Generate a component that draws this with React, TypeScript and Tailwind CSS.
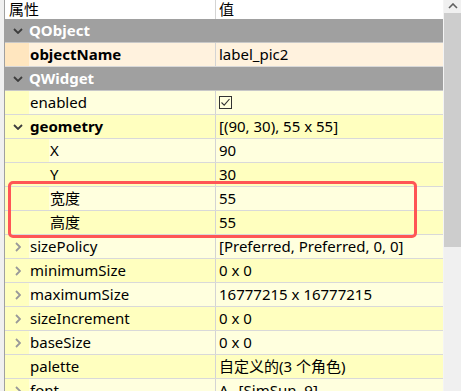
import React from 'react';

type Row = {
  name: string;
  kind: 'group' | 'prop';
  level?: number;
  expand?: 'open' | 'closed';
  bold?: boolean;
  tone?: 'dark' | 'light';
  band?: 'obj' | 'widget';
  value?: React.ReactNode;
};

const colors = {
  obj: { dark: 'bg-[#ffe6bf]', light: 'bg-[#fff2de]' },
  widget: { dark: 'bg-[#ffffbf]', light: 'bg-[#ffffde]' },
};

function ChevronDown({ className = '' }: { className?: string }) {
  return (
    <svg width="10" height="6" viewBox="0 0 10 6" className={className}>
      <path d="M1 1 L5 5 L9 1" fill="none" stroke="#3c3c3c" strokeWidth="1.8" />
    </svg>
  );
}

function ChevronRight() {
  return (
    <svg width="6" height="10" viewBox="0 0 6 10">
      <path d="M1 1 L5 5 L1 9" fill="none" stroke="#999999" strokeWidth="1.8" />
    </svg>
  );
}

function CheckBox() {
  return (
    <span className="flex h-[13px] w-[13px] items-center justify-center border border-[#333333]">
      <svg width="11" height="11" viewBox="0 0 11 11">
        <path d="M1.5 5.5 L4.2 8.2 L9.5 2" fill="none" stroke="#333333" strokeWidth="1.1" />
      </svg>
    </span>
  );
}

const rows: Row[] = [
  { name: 'QObject', kind: 'group' },
  { name: 'objectName', kind: 'prop', bold: true, band: 'obj', tone: 'light', value: 'label_pic2' },
  { name: 'QWidget', kind: 'group' },
  { name: 'enabled', kind: 'prop', band: 'widget', tone: 'light', value: <CheckBox /> },
  { name: 'geometry', kind: 'prop', bold: true, expand: 'open', band: 'widget', tone: 'dark', value: '[(90, 30), 55 x 55]' },
  { name: 'X', kind: 'prop', level: 1, band: 'widget', tone: 'light', value: '90' },
  { name: 'Y', kind: 'prop', level: 1, band: 'widget', tone: 'dark', value: '30' },
  { name: '宽度', kind: 'prop', level: 1, band: 'widget', tone: 'light', value: '55' },
  { name: '高度', kind: 'prop', level: 1, band: 'widget', tone: 'dark', value: '55' },
  { name: 'sizePolicy', kind: 'prop', expand: 'closed', band: 'widget', tone: 'light', value: '[Preferred, Preferred, 0, 0]' },
  { name: 'minimumSize', kind: 'prop', expand: 'closed', band: 'widget', tone: 'dark', value: '0 x 0' },
  { name: 'maximumSize', kind: 'prop', expand: 'closed', band: 'widget', tone: 'light', value: '16777215 x 16777215' },
  { name: 'sizeIncrement', kind: 'prop', expand: 'closed', band: 'widget', tone: 'dark', value: '0 x 0' },
  { name: 'baseSize', kind: 'prop', expand: 'closed', band: 'widget', tone: 'light', value: '0 x 0' },
  { name: 'palette', kind: 'prop', band: 'widget', tone: 'dark', value: '自定义的(3 个角色)' },
  {
    name: 'font',
    kind: 'prop',
    expand: 'closed',
    band: 'widget',
    tone: 'light',
    value: (
      <span className="flex items-center gap-[10px]">
        <span>A</span>
        <span>[SimSun, 9]</span>
      </span>
    ),
  },
];

function PropRow({ row }: { row: Row }) {
  if (row.kind === 'group') {
    return (
      <div className="flex h-[24px] shrink-0 items-center border-b border-[#c8c8c8] bg-[#a0a0a0]">
        <div className="flex w-[24px] justify-center pl-[2px]">
          <ChevronDown />
        </div>
        <span className="font-bold text-white">{row.name}</span>
      </div>
    );
  }
  const band = colors[row.band ?? 'widget'];
  const bg = row.tone === 'dark' ? band.dark : band.light;
  const indent = row.level === 1 ? 'w-[44px]' : 'w-[24px]';
  return (
    <div className={`flex h-[24px] shrink-0 border-b border-[#d9d9d9] ${bg}`}>
      <div className="flex w-[211px] shrink-0 border-r border-[#d4d4d4]">
        <div className={`flex shrink-0 items-center justify-center pl-[2px] ${indent} ${band.dark}`}>
          {row.level !== 1 && row.expand === 'open' && <ChevronDown />}
          {row.level !== 1 && row.expand === 'closed' && <ChevronRight />}
        </div>
        <span className={`flex items-center pl-[1px] ${row.bold ? 'font-bold' : ''}`}>{row.name}</span>
      </div>
      <div className="flex min-w-0 flex-1 items-center pl-[3px] whitespace-nowrap">{row.value}</div>
    </div>
  );
}

export default function App() {
  return (
    <div
      className="flex h-[391px] w-[461px] overflow-hidden bg-[#f0f0f0] text-[15px] leading-none text-[#000000]"
      style={{ fontFamily: '"Noto Sans", "Noto Sans CJK SC", sans-serif' }}
    >
      <div className="w-[5px] shrink-0 border-r border-[#a0a0a0] bg-[#f0f0f0]" />
      <div className="relative flex min-w-0 flex-1 flex-col overflow-hidden">
        <div className="flex h-[19px] shrink-0 bg-white">
          <div className="flex w-[211px] shrink-0 items-center border-r border-[#d4d4d4] pl-[4px]">属性</div>
          <div className="flex items-center pl-[3px]">值</div>
        </div>
        {rows.map((r) => (
          <PropRow key={r.name} row={r} />
        ))}
        <div className="pointer-events-none absolute left-[3px] top-[181px] h-[57px] w-[409px] rounded-[5px] border-[3px] border-[#ff5555]" />
      </div>
      <div className="flex w-[18px] shrink-0 flex-col border-l border-[#f4f4f4] bg-[#f0f0f0]">
        <div className="flex h-[13px] shrink-0 items-start justify-center pt-[3px]">
          <svg width="10" height="6" viewBox="0 0 10 6">
            <path d="M1 5 L5 1 L9 5" fill="none" stroke="#606060" strokeWidth="1.6" />
          </svg>
        </div>
        <div className="h-[234px] shrink-0 bg-[#cdcdcd]" />
      </div>
    </div>
  );
}
